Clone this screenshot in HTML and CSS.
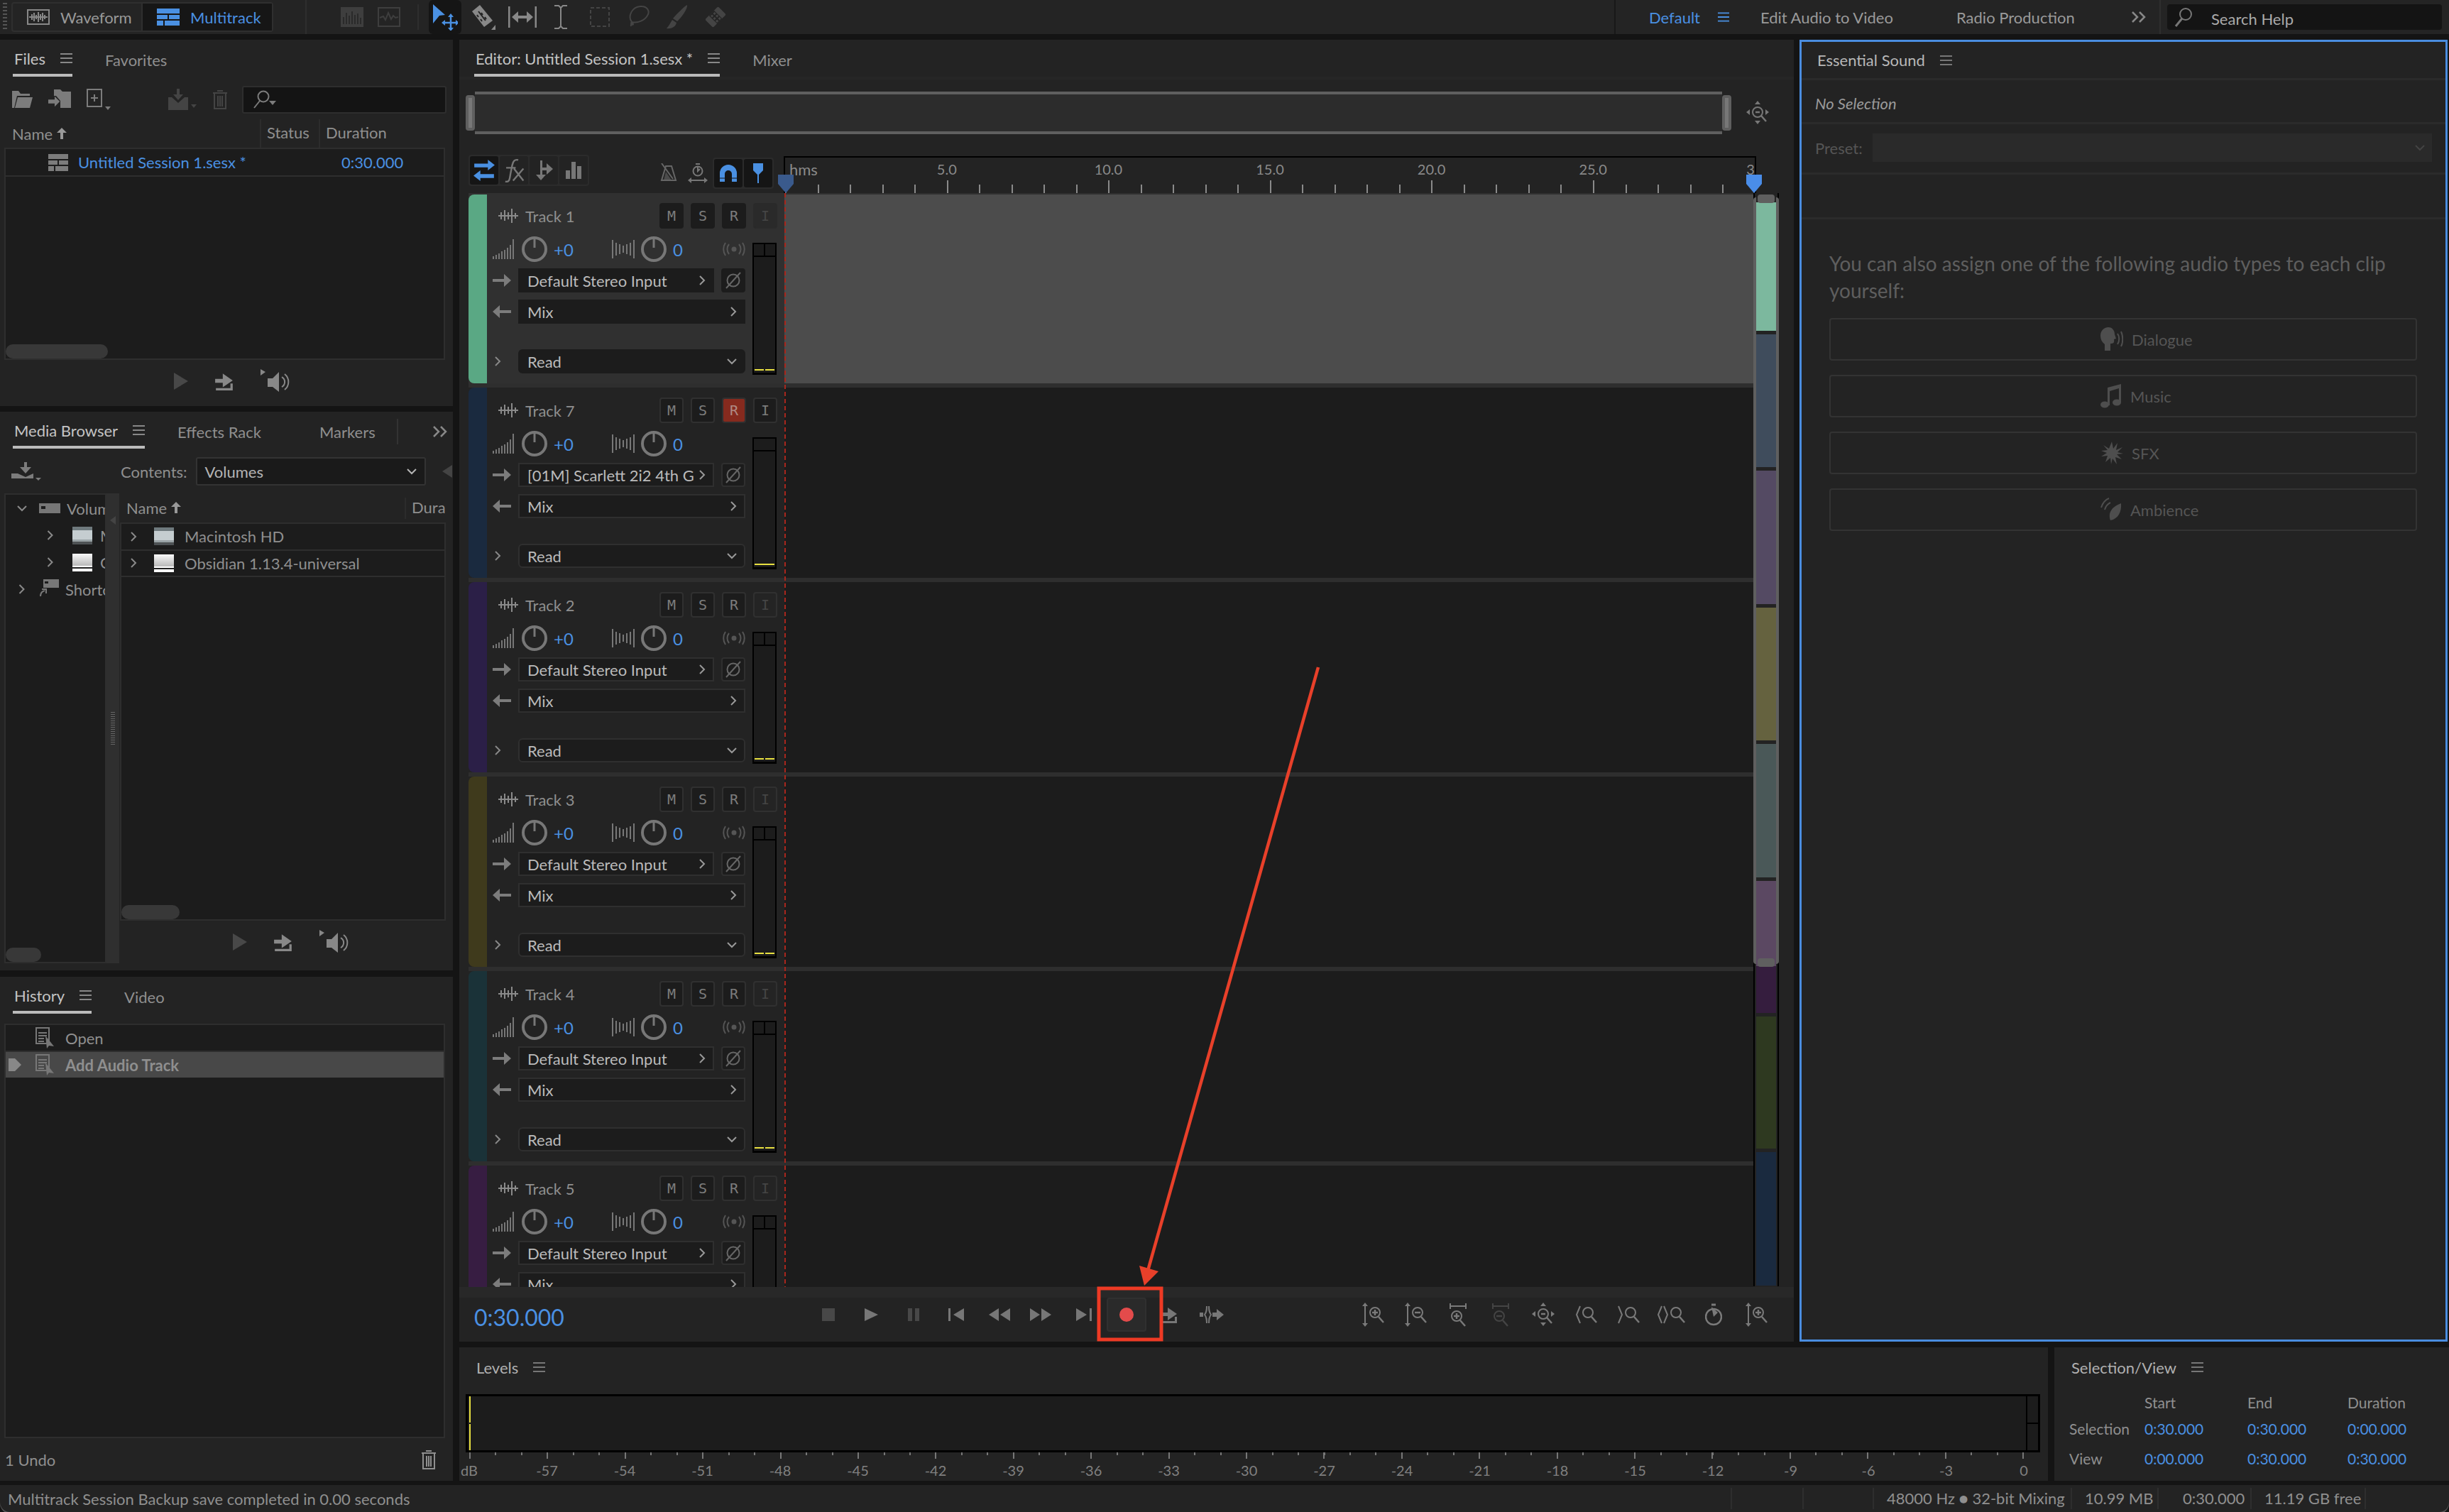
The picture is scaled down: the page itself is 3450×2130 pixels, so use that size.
FILE: index.html
```html
<!DOCTYPE html>
<html lang="en">
<head>
    <meta charset="UTF-8">
    <title>Adobe Audition - Multitrack</title>
    <link rel="stylesheet" href="styles.css">
</head>
<body>

<svg class="defs" width="0" height="0">
    <defs>
        <symbol id="i-menu" viewBox="0 0 17 14"><path d="M0 0h17v2H0zM0 6h17v2H0zM0 12h17v2H0z" fill="currentColor"/></symbol>
        <symbol id="i-up" viewBox="0 0 14 16"><path d="M7 0l7 7H9v9H5V7H0z" fill="currentColor"/></symbol>
        <symbol id="i-wavebox" viewBox="0 0 32 22"><path d="M1 1h30v20H1z" fill="none" stroke="currentColor" stroke-width="2"/><path d="M3 11h26M7 7v8M10 5v12M13 8v6M16 4v14M19 7v8M22 5v12M25 8v6" stroke="currentColor" stroke-width="2" fill="none"/></symbol>
        <symbol id="i-multi" viewBox="0 0 32 24"><path d="M0 0h32v7H0zM0 9h15v6H0zM17 9h15v6H17zM0 17h9v7H0zM11 17h21v7H11z" fill="currentColor"/></symbol>
        <symbol id="i-dimwave" viewBox="0 0 32 28"><path d="M0 0h32v28H0z" fill="currentColor"/><path d="M4 24V14M8 24V8M12 24V12M16 24V6M20 24V11M24 24V9M28 24V15" stroke="#242424" stroke-width="1.5"/></symbol>
        <symbol id="i-dimspec" viewBox="0 0 32 28"><path d="M1 1h30v26H1z" fill="none" stroke="currentColor" stroke-width="2"/><path d="M3 15l5-2 3 5 4-10 4 9 3-5 3 3 4-1" fill="none" stroke="currentColor" stroke-width="2"/></symbol>
        <symbol id="i-move" viewBox="0 0 36 38"><path d="M1 1l17 15-8 1-9 11z" fill="currentColor"/><path d="M26 17v20M16 27h20" stroke="currentColor" stroke-width="2.5"/><path d="M26 14l4 5h-8zM26 39l4-5h-8zM13 27l5-4v8zM38 27l-5-4v8z" fill="currentColor"/></symbol>
        <symbol id="i-razor" viewBox="0 0 36 36"><path d="M12 1L1 10l17 22 12-9z" fill="currentColor"/><path d="M10 10l10 13M14 12l2 3M8 15l2 3M19 18l2 3M13 21l2 3" stroke="#242424" stroke-width="2"/><path d="M34 29v7h-6z" fill="currentColor"/></symbol>
        <symbol id="i-range" viewBox="0 0 40 30"><path d="M1 0v30M39 0v30" stroke="currentColor" stroke-width="3"/><path d="M8 15h24" stroke="currentColor" stroke-width="4"/><path d="M5 15l9-8v16zM35 15l-9-8v16z" fill="currentColor"/></symbol>
        <symbol id="i-ibeam" viewBox="0 0 22 34"><path d="M2 1h6l3 3 3-3h6M2 33h6l3-3 3 3h6M11 4v26" fill="none" stroke="currentColor" stroke-width="2"/></symbol>
        <symbol id="i-marquee" viewBox="0 0 28 28"><path d="M1 1h26v26H1z" fill="none" stroke="currentColor" stroke-width="2" stroke-dasharray="5 3"/></symbol>
        <symbol id="i-lasso" viewBox="0 0 34 34"><path d="M8 24C2 16 8 3 20 2c10-1 14 7 10 13-4 7-14 11-22 9zM8 24c-3 3 2 5 2 3s-4-1-3 3" fill="none" stroke="currentColor" stroke-width="2"/></symbol>
        <symbol id="i-brush" viewBox="0 0 32 36"><path d="M30 1c1 5-8 18-14 23l-6-4C16 13 26 3 30 1zM9 22l6 4c-1 6-8 9-14 8 3-3 5-7 8-12z" fill="currentColor"/></symbol>
        <symbol id="i-heal" viewBox="0 0 38 36"><g transform="rotate(-45 19 18)"><rect x="6" y="10" width="26" height="16" rx="2" fill="currentColor"/><rect x="14" y="10" width="10" height="16" fill="#242424"/><path d="M15 12h3v3h-3zM20 12h3v3h-3zM15 17h3v3h-3zM20 17h3v3h-3zM15 22h3v3h-3zM20 22h3v3h-3z" fill="currentColor"/></g></symbol>
        <symbol id="i-folder" viewBox="0 0 30 24"><path d="M1 0h9l3 4h13v3H8L4 24H1zM9 9h21l-4 15H5z" fill="currentColor"/></symbol>
        <symbol id="i-folderin" viewBox="0 0 32 28"><path d="M8 0h9l3 3h12v23H17V16L11 9H8z" fill="currentColor"/><path d="M0 17h10v-5l8 8-8 8v-5H0z" fill="currentColor" transform="translate(0 -1) scale(.9)"/></symbol>
        <symbol id="i-newbox" viewBox="0 0 34 30"><path d="M1 1h20v24H1z" fill="none" stroke="currentColor" stroke-width="2"/><path d="M11 8v10M6 13h10" stroke="currentColor" stroke-width="2"/><path d="M26 25h8l-4 5z" fill="currentColor"/></symbol>
        <symbol id="i-insert" viewBox="0 0 40 30"><path d="M12 0h4v8h5l-7 8-7-8h5z" fill="currentColor"/><path d="M0 12h5l9 8 9-8h5v18H0z" fill="currentColor"/><path d="M32 22h8l-4 5z" fill="currentColor"/></symbol>
        <symbol id="i-trash" viewBox="0 0 22 28"><path d="M7 2h8M1 5h20M3 5v22h16V5M8 9v15M11 9v15M14 9v15" fill="none" stroke="currentColor" stroke-width="2"/></symbol>
        <symbol id="i-search" viewBox="0 0 34 26"><circle cx="16" cy="9" r="7.5" fill="none" stroke="currentColor" stroke-width="2"/><path d="M11 15L3 25" stroke="currentColor" stroke-width="2"/><path d="M24 15h10l-5 6z" fill="currentColor"/></symbol>
        <symbol id="i-searchbig" viewBox="0 0 26 28"><circle cx="16" cy="10" r="8" fill="none" stroke="currentColor" stroke-width="2"/><path d="M11 16L2 27" stroke="currentColor" stroke-width="3"/></symbol>
        <symbol id="i-play" viewBox="0 0 20 24"><path d="M0 0l20 12L0 24z" fill="currentColor"/></symbol>
        <symbol id="i-export" viewBox="0 0 28 26"><path d="M3 15v9h22v-9" fill="none" stroke="currentColor" stroke-width="4"/><path d="M3 11h11V3l12 9-12 8v-5H3z" fill="currentColor" transform="translate(0 -3)"/></symbol>
        <symbol id="i-tarrow" viewBox="0 0 26 24"><path d="M1 9h10V2l13 9-13 9v-6H1z" fill="currentColor"/><path d="M2 21h19v-6h3v9H2z" fill="currentColor"/></symbol>
        <symbol id="i-speaker" viewBox="0 0 42 34"><path d="M0 0l7 4-7 5z" fill="currentColor"/><path d="M10 13h7l9-9v28l-9-7h-7z" fill="currentColor"/><path d="M30 11a8 8 0 0 1 0 14M34 7a14 14 0 0 1 0 22" fill="none" stroke="currentColor" stroke-width="2"/></symbol>
        <symbol id="i-trk" viewBox="0 0 28 22"><path d="M0 11h28M4 6v10M9 3v15M14 6v10M19 1v20M24 7v8" stroke="currentColor" stroke-width="2" fill="none"/></symbol>
        <symbol id="i-vol" viewBox="0 0 30 28"><path d="M1 28v-4M5 28v-6M9 28v-8M13 28v-11M17 28v-13M21 28v-16M25 28v-20M29 28V0" stroke="currentColor" stroke-width="2"/></symbol>
        <symbol id="i-pan" viewBox="0 0 32 26"><path d="M1 26V0M6 22V4M11 20V6M16 18V8M21 20V6M26 22V4M31 26V0" stroke="currentColor" stroke-width="2"/></symbol>
        <symbol id="i-knob" viewBox="0 0 36 36"><circle cx="18" cy="18" r="16" fill="none" stroke="currentColor" stroke-width="4"/><path d="M18 1v15" stroke="currentColor" stroke-width="3"/></symbol>
        <symbol id="i-mon" viewBox="0 0 32 20"><circle cx="16" cy="10" r="3.5" fill="currentColor"/><path d="M9 3a11 11 0 0 0 0 14M23 3a11 11 0 0 1 0 14M4 1a16 16 0 0 0 0 18M28 1a16 16 0 0 1 0 18" fill="none" stroke="currentColor" stroke-width="2"/></symbol>
        <symbol id="i-right" viewBox="0 0 26 18"><path d="M0 7h16V0l10 9-10 9v-7H0z" fill="currentColor"/></symbol>
        <symbol id="i-left" viewBox="0 0 26 18"><path d="M26 7H10V0L0 9l10 9v-7h16z" fill="currentColor"/></symbol>
        <symbol id="i-phase" viewBox="0 0 22 24"><circle cx="11" cy="12" r="8.5" fill="none" stroke="currentColor" stroke-width="2"/><path d="M21 1L1 23" stroke="currentColor" stroke-width="2"/></symbol>
        <symbol id="i-chevr" viewBox="0 0 9 14"><path d="M1 1l6 6-6 6" fill="none" stroke="currentColor" stroke-width="2"/></symbol>
        <symbol id="i-chevd" viewBox="0 0 14 9"><path d="M1 1l6 6 6-6" fill="none" stroke="currentColor" stroke-width="2"/></symbol>
        <symbol id="i-dbl" viewBox="0 0 20 16"><path d="M1 1l7 7-7 7M11 1l7 7-7 7" fill="none" stroke="currentColor" stroke-width="2.5"/></symbol>
        <symbol id="i-swap" viewBox="0 0 30 28"><path d="M2 8h18V3l9 7-9 7v-4H2z" fill="currentColor" transform="translate(0 -3)"/><path d="M28 20H10v-5l-9 7 9 7v-4h18z" fill="currentColor" transform="translate(0 -1)"/></symbol>
        <symbol id="i-fx" viewBox="0 0 28 28"><path d="M4 27c5 1 5-3 6-9l2-10c1-5 3-7 7-6M5 11h11M14 12l11 14M25 12L13 26" fill="none" stroke="currentColor" stroke-width="2"/></symbol>
        <symbol id="i-route" viewBox="0 0 26 28"><path d="M8 0h3v10h6V4l9 8-9 8v-6h-6v6h5l-7 8-7-8h6z" fill="currentColor"/></symbol>
        <symbol id="i-bars" viewBox="0 0 22 24"><path d="M0 12h6v12H0zM8 0h6v24H8zM16 6h6v18h-6z" fill="currentColor"/></symbol>
        <symbol id="i-metro" viewBox="0 0 24 26"><path d="M8 4h8l6 20H2zM2 0l16 22" fill="none" stroke="currentColor" stroke-width="2"/><path d="M5 24l3-12 8 12z" fill="currentColor" opacity=".6"/></symbol>
        <symbol id="i-timer" viewBox="0 0 28 28"><circle cx="14" cy="11" r="6.5" fill="none" stroke="currentColor" stroke-width="2"/><path d="M11 1h6M14 4v7l3-3M4 24h20" fill="none" stroke="currentColor" stroke-width="2"/><path d="M0 24l5-4v8zM28 24l-5-4v8z" fill="currentColor"/></symbol>
        <symbol id="i-magnet" viewBox="0 0 24 25"><path d="M0 24V12a12 12 0 0 1 24 0v12h-7V13a5 5 0 0 0-10 0v11z" fill="currentColor"/><path d="M0 19h7M17 19h7" stroke="#141414" stroke-width="1"/></symbol>
        <symbol id="i-pin" viewBox="0 0 14 28"><path d="M0 0h14v10l-6 6v12H6V16l-6-6z" fill="currentColor"/></symbol>
        <symbol id="i-zoomall" viewBox="0 0 34 34"><circle cx="17" cy="16" r="7" fill="none" stroke="currentColor" stroke-width="2"/><path d="M14 16h6M22 21l7 8" stroke="currentColor" stroke-width="2.5"/><path d="M17 0l4 5h-8zM1 16l5-4v8zM33 16l-5-4v8zM17 33l4-5h-8z" fill="currentColor"/></symbol>
        <symbol id="i-start" viewBox="0 0 22 18"><path d="M0 0h3v18H0zM22 0v18L7 9z" fill="currentColor"/></symbol>
        <symbol id="i-end" viewBox="0 0 22 18"><path d="M19 0h3v18h-3zM0 0v18l15-9z" fill="currentColor"/></symbol>
        <symbol id="i-rew" viewBox="0 0 32 18"><path d="M16 0v18L2 9zM32 0v18L18 9z" fill="currentColor"/></symbol>
        <symbol id="i-ffw" viewBox="0 0 32 18"><path d="M0 0v18l14-9zM16 0v18l14-9z" fill="currentColor"/></symbol>
        <symbol id="i-skip" viewBox="0 0 34 24"><path d="M10 0c0 5 0 8-3 12 3 4 3 7 3 12M13 0c0 5 0 8 3 12-3 4-3 7-3 12" fill="none" stroke="currentColor" stroke-width="2"/><path d="M0 9h5v6H0zM18 9h6V4l10 8-10 8v-5h-6z" fill="currentColor"/></symbol>
        <symbol id="i-magp" viewBox="0 0 22 24"><circle cx="9" cy="9" r="7" fill="none" stroke="currentColor" stroke-width="2"/><path d="M9 5v8M5 9h8M14 15l7 8" stroke="currentColor" stroke-width="2.5" fill="none"/></symbol>
        <symbol id="i-magm" viewBox="0 0 22 24"><circle cx="9" cy="9" r="7" fill="none" stroke="currentColor" stroke-width="2"/><path d="M5 9h8M14 15l7 8" stroke="currentColor" stroke-width="2.5" fill="none"/></symbol>
        <symbol id="i-mag" viewBox="0 0 22 24"><circle cx="9" cy="9" r="7" fill="none" stroke="currentColor" stroke-width="2"/><path d="M14 15l7 8" stroke="currentColor" stroke-width="2.5" fill="none"/></symbol>
        <symbol id="i-vspan" viewBox="0 0 8 34"><path d="M4 4v26" stroke="currentColor" stroke-width="2"/><path d="M4 0l4 5H0zM4 34l4-5H0z" fill="currentColor"/></symbol>
        <symbol id="i-hspan" viewBox="0 0 24 8"><path d="M2 4h20M1 0v8M23 0v8" stroke="currentColor" stroke-width="2"/></symbol>
        <symbol id="i-brace" viewBox="0 0 8 26"><path d="M7 1L2 13l5 12" fill="none" stroke="currentColor" stroke-width="2"/></symbol>
        <symbol id="i-clock" viewBox="0 0 24 32"><circle cx="12" cy="19" r="11" fill="none" stroke="currentColor" stroke-width="2.5"/><path d="M12 19L9 5l9 8z" fill="currentColor"/><path d="M9 2h6" stroke="currentColor" stroke-width="3"/></symbol>
        <symbol id="i-session" viewBox="0 0 28 24"><path d="M0 0h28v7H0zM0 9h13v6H0zM15 9h13v6H15zM0 17h8v7H0zM10 17h18v7H10z" fill="currentColor"/></symbol>
        <symbol id="i-import" viewBox="0 0 42 26"><path d="M18 0h4v7h6l-8 9-8-9h6z" fill="currentColor"/><path d="M0 16h9l11 5 11-5v7H0z" fill="currentColor"/><path d="M34 22h8l-4 4z" fill="currentColor"/></symbol>
        <symbol id="i-volume" viewBox="0 0 30 14"><path d="M0 0h30v14H0z" fill="currentColor"/><path d="M3 4h6v4H3z" fill="#1c1c1c"/></symbol>
        <symbol id="i-short" viewBox="0 0 28 28"><path d="M6 0h22v12H6z" fill="currentColor"/><path d="M8 3h5v3H8z" fill="#1c1c1c"/><path d="M2 24c0-4 2-7 6-8M4 14h6v6" fill="none" stroke="currentColor" stroke-width="2"/></symbol>
        <symbol id="i-hist" viewBox="0 0 26 30"><path d="M1 1h18v22H1z" fill="none" stroke="currentColor" stroke-width="2"/><path d="M4 8h12M4 12h12M4 16h8M4 20h8" stroke="currentColor" stroke-width="2"/><path d="M14 12l12 15-7-1-3 4z" fill="currentColor"/></symbol>
        <symbol id="i-hist-tri" viewBox="0 0 18 18"><path d="M0 0h9l9 9-9 9H0z" fill="currentColor"/></symbol>
        <symbol id="i-dialogue" viewBox="0 0 32 34"><path d="M0 12C0 4 6 0 11 0c6 0 9 5 9 10l2 6-3 1c1 5-1 6-5 6v10H6v-9C2 21 0 17 0 12z" fill="currentColor"/><path d="M24 9c3 4 3 11 0 15M29 6c3 6 3 16 0 21" fill="none" stroke="currentColor" stroke-width="2"/></symbol>
        <symbol id="i-music" viewBox="0 0 30 34"><path d="M10 5L29 0v26h-3V6L13 10v20h-3z" fill="currentColor"/><ellipse cx="6" cy="29" rx="6" ry="4.5" fill="currentColor"/><ellipse cx="23" cy="26" rx="6" ry="4.5" fill="currentColor"/></symbol>
        <symbol id="i-sfx" viewBox="0 0 32 32"><path d="M16 0l2 10 6-8-2 10 9-4-7 7 8 2-9 1 7 7-9-3 2 10-6-8-2 8-1-9-7 6 3-9-9 1 8-5-8-3 9-1-6-7 8 5z" fill="currentColor"/></symbol>
        <symbol id="i-amb" viewBox="0 0 30 34"><path d="M29 8c1 12-4 22-15 24-3-8-1-18 15-24z" fill="currentColor"/><path d="M1 14C3 8 7 3 12 1M6 17c1-4 4-8 8-10" fill="none" stroke="currentColor" stroke-width="2"/></symbol>
    </defs>
</svg>

<header class="toolbar">
    <div class="grip"></div>
    <div class="modes">
        <div class="mode"><svg width="32" height="22"><use href="#i-wavebox"/></svg><span>Waveform</span></div>
        <div class="mode on"><svg width="32" height="24"><use href="#i-multi"/></svg><span>Multitrack</span></div>
    </div>
    <div class="tb-sep"></div>
    <div class="tb-dim">
        <svg width="32" height="28"><use href="#i-dimwave"/></svg>
        <svg width="32" height="28"><use href="#i-dimspec"/></svg>
    </div>
    <div class="tb-sep short"></div>
    <div class="tools">
        <div class="tool on"><svg width="36" height="38"><use href="#i-move"/></svg></div>
        <div class="tool"><svg width="36" height="36"><use href="#i-razor"/></svg></div>
        <div class="tool"><svg width="40" height="30"><use href="#i-range"/></svg></div>
        <div class="tool"><svg width="22" height="34"><use href="#i-ibeam"/></svg></div>
        <div class="tool dim"><svg width="28" height="28"><use href="#i-marquee"/></svg></div>
        <div class="tool dim"><svg width="34" height="34"><use href="#i-lasso"/></svg></div>
        <div class="tool dim"><svg width="32" height="36"><use href="#i-brush"/></svg></div>
        <div class="tool dim"><svg width="38" height="36"><use href="#i-heal"/></svg></div>
    </div>
    <div class="ws">
        <div class="ws-item ws-default">Default</div>
        <div class="ws-item ws-menu"><svg width="16" height="14"><use href="#i-menu"/></svg></div>
        <div class="ws-item ws-edit">Edit Audio to Video</div>
        <div class="ws-item ws-radio">Radio Production</div>
        <div class="ws-item ws-more"><svg width="20" height="16"><use href="#i-dbl"/></svg></div>
    </div>
    <div class="help">
        <svg width="26" height="28"><use href="#i-searchbig"/></svg>
        <span>Search Help</span>
    </div>
</header>

<main class="workspace">
    <div class="left-col">

        <section class="panel files">
            <div class="tabs">
                <div class="tab active"><span>Files</span><svg width="17" height="14"><use href="#i-menu"/></svg></div>
                <div class="tab"><span>Favorites</span></div>
            </div>
            <div class="file-tools">
                <svg width="30" height="24"><use href="#i-folder"/></svg>
                <svg width="32" height="28"><use href="#i-folderin"/></svg>
                <svg width="34" height="30"><use href="#i-newbox"/></svg>
                <svg class="dim first-dim" width="40" height="30"><use href="#i-insert"/></svg>
                <svg class="dim" width="22" height="28"><use href="#i-trash"/></svg>
                <div class="search"><svg width="34" height="26"><use href="#i-search"/></svg></div>
            </div>
            <div class="list-head">
                <div class="lh-name">Name <svg class="sort" width="14" height="16"><use href="#i-up"/></svg></div>
                <div class="lh-status">Status</div>
                <div class="lh-dur">Duration</div>
            </div>
            <div class="list file-list">
                <div class="row file-row">
                    <svg width="28" height="24"><use href="#i-session"/></svg>
                    <span class="blue f-name">Untitled Session 1.sesx *</span>
                    <span class="blue f-dur">0:30.000</span>
                </div>
                <div class="thumb file-thumb"></div>
            </div>
            <div class="preview">
                <svg class="dim" width="20" height="24"><use href="#i-play"/></svg>
                <svg width="28" height="26"><use href="#i-tarrow"/></svg>
                <svg width="42" height="34"><use href="#i-speaker"/></svg>
            </div>
        </section>

        <section class="panel media">
            <div class="tabs">
                <div class="tab active"><span>Media Browser</span><svg width="17" height="14"><use href="#i-menu"/></svg></div>
                <div class="tab"><span>Effects Rack</span></div>
                <div class="tab wide"><span>Markers</span></div>
                <div class="tab-end"><svg width="20" height="16"><use href="#i-dbl"/></svg></div>
            </div>
            <div class="contents-row">
                <svg width="42" height="26"><use href="#i-import"/></svg>
                <span class="contents-label">Contents:</span>
                <div class="contents-select"><span>Volumes</span><svg width="14" height="9"><use href="#i-chevd"/></svg></div>
                <div class="tri-left"></div>
            </div>
            <div class="browser">
                <div class="list tree">
                    <div class="tree-row"><svg class="chev" width="14" height="9"><use href="#i-chevd"/></svg><svg class="t-ic" width="30" height="14"><use href="#i-volume"/></svg><span>Volumes</span></div>
                    <div class="tree-row sub"><svg class="chev" width="9" height="14"><use href="#i-chevr"/></svg><div class="disk hd"></div><span>Macintosh HD</span></div>
                    <div class="tree-row sub"><svg class="chev" width="9" height="14"><use href="#i-chevr"/></svg><div class="disk ext"></div><span>Obsidian</span></div>
                    <div class="tree-row"><svg class="chev" width="9" height="14"><use href="#i-chevr"/></svg><svg class="t-ic" width="28" height="28"><use href="#i-short"/></svg><span>Shortcuts</span></div>
                    <div class="thumb tree-thumb"></div>
                </div>
                <div class="divider"><div class="tri-left small"></div><div class="dots"></div></div>
                <div class="browser-right">
                    <div class="browser-head">
                        <div class="bh-name">Name <svg class="sort" width="14" height="16"><use href="#i-up"/></svg></div>
                        <div class="bh-dur">Dura</div>
                    </div>
                    <div class="list browse-list">
                        <div class="row browse-row"><svg width="9" height="14"><use href="#i-chevr"/></svg><div class="disk hd"></div><span>Macintosh HD</span></div>
                        <div class="row browse-row"><svg width="9" height="14"><use href="#i-chevr"/></svg><div class="disk ext"></div><span>Obsidian 1.13.4-universal</span></div>
                        <div class="thumb browse-thumb"></div>
                    </div>
                    <div class="preview media-preview">
                        <svg class="dim" width="20" height="24"><use href="#i-play"/></svg>
                        <svg width="28" height="26"><use href="#i-tarrow"/></svg>
                        <svg width="42" height="34"><use href="#i-speaker"/></svg>
                    </div>
                </div>
            </div>
        </section>

        <section class="panel history">
            <div class="tabs">
                <div class="tab active"><span>History</span><svg width="17" height="14"><use href="#i-menu"/></svg></div>
                <div class="tab"><span>Video</span></div>
            </div>
            <div class="list hist-list">
                <div class="hist-row"><svg class="h-ic" width="26" height="30"><use href="#i-hist"/></svg><span>Open</span></div>
                <div class="hist-row cur"><svg class="h-tri" width="18" height="18"><use href="#i-hist-tri"/></svg><svg class="h-ic" width="26" height="30"><use href="#i-hist"/></svg><span>Add Audio Track</span></div>
            </div>
            <div class="hist-foot">
                <span>1 Undo</span>
                <svg width="22" height="28"><use href="#i-trash"/></svg>
            </div>
        </section>
    </div>

    <div class="right-col">
        <div class="upper">
            <section class="panel editor">
                <div class="tabs editor-tabs">
                    <div class="tab active"><span>Editor: Untitled Session 1.sesx *</span><svg width="17" height="14"><use href="#i-menu"/></svg></div>
                    <div class="tab"><span>Mixer</span></div>
                </div>
                <div class="zoom-row">
                    <div class="nav-bar"><div class="nav-h"></div><div class="nav-mid"></div><div class="nav-h"></div></div>
                    <svg width="34" height="34"><use href="#i-zoomall"/></svg>
                </div>
                <div class="ctl-row">
                    <div class="seg-group">
                        <div class="seg on"><svg width="32" height="30"><use href="#i-swap"/></svg></div>
                        <div class="seg"><svg width="34" height="34"><use href="#i-fx"/></svg></div>
                        <div class="seg"><svg width="26" height="30"><use href="#i-route"/></svg></div>
                        <div class="seg"><svg width="22" height="24"><use href="#i-bars"/></svg></div>
                    </div>
                    <svg class="metro" width="24" height="26"><use href="#i-metro"/></svg>
                    <svg class="timer" width="28" height="28"><use href="#i-timer"/></svg>
                    <div class="snap">
                        <div class="seg on"><svg width="24" height="25"><use href="#i-magnet"/></svg></div>
                        <div class="seg on"><svg width="14" height="28"><use href="#i-pin"/></svg></div>
                    </div>
                    <div class="ruler">
                        <div class="ruler-labels">
                            <span class="hms">hms</span><span>5.0</span><span>10.0</span><span>15.0</span><span>20.0</span><span>25.0</span><span>30</span>
                        </div>
                        <div class="ruler-ticks"></div>
                    </div>
                    <div class="marker m-start"></div>
                    <div class="marker m-end"></div>
                </div>

                <div class="lanes">
                    <div class="tracks">

                        <div class="track sel">
                            <div class="head">
                                <div class="band b1"></div>
                                <div class="head-body">
                                    <div class="name-row"><svg width="28" height="22"><use href="#i-trk"/></svg><span class="t-name">Track 1</span><div class="msri"><b>M</b><b>S</b><b>R</b><b class="off">I</b></div></div>
                                    <div class="ctl-wrap">
                                        <div class="ctls">
                                            <div class="knobs"><svg class="vol" width="30" height="28"><use href="#i-vol"/></svg><svg class="knob" width="36" height="36"><use href="#i-knob"/></svg><span class="val v-vol">+0</span><svg class="pan" width="32" height="26"><use href="#i-pan"/></svg><svg class="knob" width="36" height="36"><use href="#i-knob"/></svg><span class="val v-pan">0</span><svg class="mon" width="32" height="20"><use href="#i-mon"/></svg></div>
                                            <div class="io in"><svg class="io-ic" width="26" height="18"><use href="#i-right"/></svg><div class="sel-box"><span>Default Stereo Input</span><svg width="9" height="14"><use href="#i-chevr"/></svg></div><div class="phase"><svg width="22" height="24"><use href="#i-phase"/></svg></div></div>
                                            <div class="io out"><svg class="io-ic" width="26" height="18"><use href="#i-left"/></svg><div class="sel-box"><span>Mix</span><svg width="9" height="14"><use href="#i-chevr"/></svg></div></div>
                                            <div class="io auto"><svg class="io-ic chev-ic" width="9" height="14"><use href="#i-chevr"/></svg><div class="sel-box round"><span>Read</span><svg width="14" height="9"><use href="#i-chevd"/></svg></div></div>
                                        </div>
                                        <div class="meter"><div class="m-top"><i></i><i></i></div><div class="m-body"><i></i><i></i></div></div>
                                    </div>
                                </div>
                            </div>
                            <div class="clip"></div>
                        </div>

                        <div class="track arm">
                            <div class="head">
                                <div class="band b7"></div>
                                <div class="head-body">
                                    <div class="name-row"><svg width="28" height="22"><use href="#i-trk"/></svg><span class="t-name">Track 7</span><div class="msri"><b>M</b><b>S</b><b class="rec">R</b><b>I</b></div></div>
                                    <div class="ctl-wrap">
                                        <div class="ctls">
                                            <div class="knobs"><svg class="vol" width="30" height="28"><use href="#i-vol"/></svg><svg class="knob" width="36" height="36"><use href="#i-knob"/></svg><span class="val v-vol">+0</span><svg class="pan" width="32" height="26"><use href="#i-pan"/></svg><svg class="knob" width="36" height="36"><use href="#i-knob"/></svg><span class="val v-pan">0</span></div>
                                            <div class="io in"><svg class="io-ic" width="26" height="18"><use href="#i-right"/></svg><div class="sel-box"><span>[01M] Scarlett 2i2 4th G</span><svg width="9" height="14"><use href="#i-chevr"/></svg></div><div class="phase"><svg width="22" height="24"><use href="#i-phase"/></svg></div></div>
                                            <div class="io out"><svg class="io-ic" width="26" height="18"><use href="#i-left"/></svg><div class="sel-box"><span>Mix</span><svg width="9" height="14"><use href="#i-chevr"/></svg></div></div>
                                            <div class="io auto"><svg class="io-ic chev-ic" width="9" height="14"><use href="#i-chevr"/></svg><div class="sel-box round"><span>Read</span><svg width="14" height="9"><use href="#i-chevd"/></svg></div></div>
                                        </div>
                                        <div class="meter"><div class="m-top"><i></i></div><div class="m-body"><i></i></div></div>
                                    </div>
                                </div>
                            </div>
                            <div class="clip"></div>
                        </div>

                        <div class="track">
                            <div class="head">
                                <div class="band b2"></div>
                                <div class="head-body">
                                    <div class="name-row"><svg width="28" height="22"><use href="#i-trk"/></svg><span class="t-name">Track 2</span><div class="msri"><b>M</b><b>S</b><b>R</b><b class="off">I</b></div></div>
                                    <div class="ctl-wrap">
                                        <div class="ctls">
                                            <div class="knobs"><svg class="vol" width="30" height="28"><use href="#i-vol"/></svg><svg class="knob" width="36" height="36"><use href="#i-knob"/></svg><span class="val v-vol">+0</span><svg class="pan" width="32" height="26"><use href="#i-pan"/></svg><svg class="knob" width="36" height="36"><use href="#i-knob"/></svg><span class="val v-pan">0</span><svg class="mon" width="32" height="20"><use href="#i-mon"/></svg></div>
                                            <div class="io in"><svg class="io-ic" width="26" height="18"><use href="#i-right"/></svg><div class="sel-box"><span>Default Stereo Input</span><svg width="9" height="14"><use href="#i-chevr"/></svg></div><div class="phase"><svg width="22" height="24"><use href="#i-phase"/></svg></div></div>
                                            <div class="io out"><svg class="io-ic" width="26" height="18"><use href="#i-left"/></svg><div class="sel-box"><span>Mix</span><svg width="9" height="14"><use href="#i-chevr"/></svg></div></div>
                                            <div class="io auto"><svg class="io-ic chev-ic" width="9" height="14"><use href="#i-chevr"/></svg><div class="sel-box round"><span>Read</span><svg width="14" height="9"><use href="#i-chevd"/></svg></div></div>
                                        </div>
                                        <div class="meter"><div class="m-top"><i></i><i></i></div><div class="m-body"><i></i><i></i></div></div>
                                    </div>
                                </div>
                            </div>
                            <div class="clip"></div>
                        </div>

                        <div class="track">
                            <div class="head">
                                <div class="band b3"></div>
                                <div class="head-body">
                                    <div class="name-row"><svg width="28" height="22"><use href="#i-trk"/></svg><span class="t-name">Track 3</span><div class="msri"><b>M</b><b>S</b><b>R</b><b class="off">I</b></div></div>
                                    <div class="ctl-wrap">
                                        <div class="ctls">
                                            <div class="knobs"><svg class="vol" width="30" height="28"><use href="#i-vol"/></svg><svg class="knob" width="36" height="36"><use href="#i-knob"/></svg><span class="val v-vol">+0</span><svg class="pan" width="32" height="26"><use href="#i-pan"/></svg><svg class="knob" width="36" height="36"><use href="#i-knob"/></svg><span class="val v-pan">0</span><svg class="mon" width="32" height="20"><use href="#i-mon"/></svg></div>
                                            <div class="io in"><svg class="io-ic" width="26" height="18"><use href="#i-right"/></svg><div class="sel-box"><span>Default Stereo Input</span><svg width="9" height="14"><use href="#i-chevr"/></svg></div><div class="phase"><svg width="22" height="24"><use href="#i-phase"/></svg></div></div>
                                            <div class="io out"><svg class="io-ic" width="26" height="18"><use href="#i-left"/></svg><div class="sel-box"><span>Mix</span><svg width="9" height="14"><use href="#i-chevr"/></svg></div></div>
                                            <div class="io auto"><svg class="io-ic chev-ic" width="9" height="14"><use href="#i-chevr"/></svg><div class="sel-box round"><span>Read</span><svg width="14" height="9"><use href="#i-chevd"/></svg></div></div>
                                        </div>
                                        <div class="meter"><div class="m-top"><i></i><i></i></div><div class="m-body"><i></i><i></i></div></div>
                                    </div>
                                </div>
                            </div>
                            <div class="clip"></div>
                        </div>

                        <div class="track">
                            <div class="head">
                                <div class="band b4"></div>
                                <div class="head-body">
                                    <div class="name-row"><svg width="28" height="22"><use href="#i-trk"/></svg><span class="t-name">Track 4</span><div class="msri"><b>M</b><b>S</b><b>R</b><b class="off">I</b></div></div>
                                    <div class="ctl-wrap">
                                        <div class="ctls">
                                            <div class="knobs"><svg class="vol" width="30" height="28"><use href="#i-vol"/></svg><svg class="knob" width="36" height="36"><use href="#i-knob"/></svg><span class="val v-vol">+0</span><svg class="pan" width="32" height="26"><use href="#i-pan"/></svg><svg class="knob" width="36" height="36"><use href="#i-knob"/></svg><span class="val v-pan">0</span><svg class="mon" width="32" height="20"><use href="#i-mon"/></svg></div>
                                            <div class="io in"><svg class="io-ic" width="26" height="18"><use href="#i-right"/></svg><div class="sel-box"><span>Default Stereo Input</span><svg width="9" height="14"><use href="#i-chevr"/></svg></div><div class="phase"><svg width="22" height="24"><use href="#i-phase"/></svg></div></div>
                                            <div class="io out"><svg class="io-ic" width="26" height="18"><use href="#i-left"/></svg><div class="sel-box"><span>Mix</span><svg width="9" height="14"><use href="#i-chevr"/></svg></div></div>
                                            <div class="io auto"><svg class="io-ic chev-ic" width="9" height="14"><use href="#i-chevr"/></svg><div class="sel-box round"><span>Read</span><svg width="14" height="9"><use href="#i-chevd"/></svg></div></div>
                                        </div>
                                        <div class="meter"><div class="m-top"><i></i><i></i></div><div class="m-body"><i></i><i></i></div></div>
                                    </div>
                                </div>
                            </div>
                            <div class="clip"></div>
                        </div>

                        <div class="track">
                            <div class="head">
                                <div class="band b5"></div>
                                <div class="head-body">
                                    <div class="name-row"><svg width="28" height="22"><use href="#i-trk"/></svg><span class="t-name">Track 5</span><div class="msri"><b>M</b><b>S</b><b>R</b><b class="off">I</b></div></div>
                                    <div class="ctl-wrap">
                                        <div class="ctls">
                                            <div class="knobs"><svg class="vol" width="30" height="28"><use href="#i-vol"/></svg><svg class="knob" width="36" height="36"><use href="#i-knob"/></svg><span class="val v-vol">+0</span><svg class="pan" width="32" height="26"><use href="#i-pan"/></svg><svg class="knob" width="36" height="36"><use href="#i-knob"/></svg><span class="val v-pan">0</span><svg class="mon" width="32" height="20"><use href="#i-mon"/></svg></div>
                                            <div class="io in"><svg class="io-ic" width="26" height="18"><use href="#i-right"/></svg><div class="sel-box"><span>Default Stereo Input</span><svg width="9" height="14"><use href="#i-chevr"/></svg></div><div class="phase"><svg width="22" height="24"><use href="#i-phase"/></svg></div></div>
                                            <div class="io out"><svg class="io-ic" width="26" height="18"><use href="#i-left"/></svg><div class="sel-box"><span>Mix</span><svg width="9" height="14"><use href="#i-chevr"/></svg></div></div>
                                        </div>
                                        <div class="meter"><div class="m-top"><i></i><i></i></div><div class="m-body"><i></i><i></i></div></div>
                                    </div>
                                </div>
                            </div>
                            <div class="clip"></div>
                        </div>

                        <div class="cti-zero"></div>
                    </div>

                    <div class="end-line"></div>
                    <div class="map">
                        <div class="map-band o1"></div>
                        <div class="map-band o2"></div>
                        <div class="map-band o3"></div>
                        <div class="map-band o4"></div>
                        <div class="map-band o5"></div>
                        <div class="map-band o6"></div>
                        <div class="map-band o7"></div>
                        <div class="map-band o8"></div>
                        <div class="map-band o9"></div>
                        <div class="map-frame"><div class="map-h top"></div><div class="map-h bot"></div></div>
                    </div>
                </div>

                <div class="transport">
                    <div class="time">0:30.000</div>
                    <div class="t-btns">
                        <div class="t-btn"><div class="stop"></div></div>
                        <div class="t-btn"><svg width="19" height="18" preserveAspectRatio="none" viewBox="0 0 20 24"><use href="#i-play"/></svg></div>
                        <div class="t-btn"><div class="pause"></div></div>
                        <div class="t-btn"><svg width="22" height="18"><use href="#i-start"/></svg></div>
                        <div class="t-btn"><svg width="32" height="18"><use href="#i-rew"/></svg></div>
                        <div class="t-btn"><svg width="32" height="18"><use href="#i-ffw"/></svg></div>
                        <div class="t-btn"><svg width="22" height="18"><use href="#i-end"/></svg></div>
                        <div class="t-btn"><div class="rec-btn"><div class="rec-dot"></div></div></div>
                        <div class="t-btn"><svg width="26" height="24"><use href="#i-tarrow"/></svg></div>
                        <div class="t-btn"><svg width="34" height="24"><use href="#i-skip"/></svg></div>
                    </div>
                    <div class="z-btns">
                        <div class="z-btn"><svg width="8" height="34"><use href="#i-vspan"/></svg><svg width="22" height="24"><use href="#i-magp"/></svg></div>
                        <div class="z-btn"><svg width="8" height="34"><use href="#i-vspan"/></svg><svg width="22" height="24"><use href="#i-magm"/></svg></div>
                        <div class="z-btn col"><svg width="24" height="8"><use href="#i-hspan"/></svg><svg width="22" height="24"><use href="#i-magp"/></svg></div>
                        <div class="z-btn col dim"><svg width="24" height="8"><use href="#i-hspan"/></svg><svg width="22" height="24"><use href="#i-magm"/></svg></div>
                        <div class="z-btn"><svg width="34" height="34"><use href="#i-zoomall"/></svg></div>
                        <div class="z-btn"><svg width="8" height="26"><use href="#i-brace"/></svg><svg width="22" height="24"><use href="#i-mag"/></svg></div>
                        <div class="z-btn"><svg class="flip" width="8" height="26"><use href="#i-brace"/></svg><svg width="22" height="24"><use href="#i-mag"/></svg></div>
                        <div class="z-btn tight"><svg width="8" height="26"><use href="#i-brace"/></svg><svg class="flip" width="8" height="26"><use href="#i-brace"/></svg><svg width="22" height="24"><use href="#i-mag"/></svg></div>
                        <div class="z-btn"><svg width="24" height="32"><use href="#i-clock"/></svg></div>
                        <div class="z-btn"><svg width="8" height="34"><use href="#i-vspan"/></svg><svg width="22" height="24"><use href="#i-magp"/></svg></div>
                    </div>
                </div>
            </section>

            <section class="panel essential">
                <div class="es-title"><span>Essential Sound</span><svg width="17" height="14"><use href="#i-menu"/></svg></div>
                <div class="es-none">No Selection</div>
                <div class="es-preset"><span>Preset:</span><div class="es-select"><svg width="14" height="9"><use href="#i-chevd"/></svg></div></div>
                <div class="es-gap"></div>
                <p class="es-text">You can also assign one of the following audio types to each clip yourself:</p>
                <div class="es-btn"><svg width="32" height="34"><use href="#i-dialogue"/></svg><span>Dialogue</span></div>
                <div class="es-btn"><svg width="30" height="34"><use href="#i-music"/></svg><span>Music</span></div>
                <div class="es-btn"><svg width="32" height="32"><use href="#i-sfx"/></svg><span>SFX</span></div>
                <div class="es-btn"><svg width="30" height="34"><use href="#i-amb"/></svg><span>Ambience</span></div>
            </section>
        </div>

        <div class="lower">
            <section class="panel levels">
                <div class="tabs plain">
                    <div class="tab head-tab"><span>Levels</span><svg width="17" height="14"><use href="#i-menu"/></svg></div>
                </div>
                <div class="lv-box">
                    <div class="lv-chan"><div class="lv-clip"></div></div>
                    <div class="lv-chan"><div class="lv-clip"></div></div>
                </div>
                <div class="lv-ticks"></div>
                <div class="lv-labels">
                    <span>dB</span><span>-57</span><span>-54</span><span>-51</span><span>-48</span><span>-45</span><span>-42</span><span>-39</span><span>-36</span><span>-33</span><span>-30</span><span>-27</span><span>-24</span><span>-21</span><span>-18</span><span>-15</span><span>-12</span><span>-9</span><span>-6</span><span>-3</span><span>0</span>
                </div>
            </section>
            <section class="panel selection">
                <div class="tabs plain">
                    <div class="tab head-tab"><span>Selection/View</span><svg width="17" height="14"><use href="#i-menu"/></svg></div>
                </div>
                <div class="sel-grid">
                    <span></span><span>Start</span><span>End</span><span>Duration</span>
                    <span>Selection</span><span class="blue">0:30.000</span><span class="blue">0:30.000</span><span class="blue">0:00.000</span>
                    <span>View</span><span class="blue">0:00.000</span><span class="blue">0:30.000</span><span class="blue">0:30.000</span>
                </div>
            </section>
        </div>
    </div>
</main>

<footer class="status">
    <div class="st-msg">Multitrack Session Backup save completed in 0.00 seconds</div>
    <div class="st-cell c1"></div>
    <div class="st-cell c2"></div>
    <div class="st-cell c3">48000 Hz &#9679; 32-bit Mixing</div>
    <div class="st-cell c4">10.99 MB</div>
    <div class="st-cell c5">0:30.000</div>
    <div class="st-cell c6">11.19 GB free</div>
</footer>

<svg class="annot" width="3450" height="2130">
    <path d="M1857 940L1617 1790" stroke="#e8402a" stroke-width="4.5" fill="none"/>
    <path d="M1612 1811L1605 1783L1632 1791z" fill="#e8402a"/>
    <rect x="1548" y="1815" width="88" height="72" fill="none" stroke="#ee3a24" stroke-width="5"/>
</svg>

</body>
</html>
```

FILE: styles.css
```css
* {
    box-sizing: border-box;
}

body {
    margin: 0;
    width: 3450px;
    height: 2130px;
    overflow: hidden;
    position: relative;
    background-color: #141414;
    font-family: Lato, "Open Sans", sans-serif;
    font-size: 22px;
    color: #8f8f8f;
}

svg {
    display: block;
    flex: none;
}

.defs {
    position: absolute;
}

.blue {
    color: #4a90e2;
}

.dim {
    color: #484848;
}

/* top toolbar */
.toolbar {
    height: 48px;
    background-color: #242424;
    display: flex;
    align-items: center;
    padding-left: 4px;
    color: #777;
}

.grip {
    width: 6px;
    height: 40px;
    background: repeating-linear-gradient(180deg, #555 0 2px, transparent 2px 5px);
}

.modes {
    display: flex;
    margin-left: 6px;
    width: 369px;
    height: 42px;
    border: 2px solid #2f2f2f;
    border-radius: 4px;
}

.mode {
    display: flex;
    align-items: center;
    gap: 15px;
    padding-left: 20px;
    width: 183px;
    color: #999;
}

.mode svg {
    color: #888;
}

.mode.on {
    background-color: #161616;
    color: #4a90e2;
    width: 186px;
    border-left: 2px solid #2f2f2f;
}

.mode.on svg {
    color: #4a90e2;
}

.tb-sep {
    width: 2px;
    height: 48px;
    background-color: #2e2e2e;
    margin-left: 45px;
}

.tb-sep.short {
    height: 36px;
    margin-left: 24px;
}

.tb-dim {
    display: flex;
    gap: 20px;
    margin-left: 48px;
    color: #3e3e3e;
}

.tools {
    display: flex;
    margin-left: 10px;
    height: 46px;
}

.tool {
    width: 54.4px;
    display: flex;
    align-items: center;
    justify-content: center;
    color: #888;
}

.tool.on {
    color: #4a90e2;
    position: relative;
}

.tool.on svg {
    background-color: #151515;
    box-shadow: 0 0 0 5px #151515;
    border-radius: 2px;
}

.tool.dim {
    color: #444;
}

.ws {
    display: flex;
    align-items: center;
    margin-left: auto;
    height: 48px;
    border-left: 2px solid #181818;
    padding-left: 47px;
}

.ws-item {
    height: 48px;
    display: flex;
    align-items: center;
    color: #9a9a9a;
}

.ws-default {
    width: 97px;
    color: #4a90e2;
}

.ws-menu {
    width: 60px;
    color: #4a90e2;
}

.ws-edit {
    width: 276px;
}

.ws-radio {
    width: 247px;
}

.ws-more {
    width: 41px;
    border-right: 2px solid #2e2e2e;
    color: #888;
}

.help {
    width: 387px;
    height: 36px;
    margin: 0 10px 0 9px;
    padding-left: 10px;
    background-color: #141414;
    border-radius: 4px;
    display: flex;
    align-items: center;
    gap: 26px;
    color: #aaa;
}

.help span {
    padding-top: 4px;
}

.help svg {
    color: #777;
}

/* panels */
.workspace {
    display: flex;
    gap: 9px;
    padding-top: 8px;
    height: 2042px;
}

.left-col {
    width: 638px;
    display: flex;
    flex-direction: column;
}

.right-col {
    flex: 1;
    display: flex;
    flex-direction: column;
    gap: 8px;
}

.panel {
    background-color: #232323;
    display: flex;
    flex-direction: column;
    color: #8f8f8f;
}

.tabs {
    display: flex;
    height: 52px;
    padding-left: 18px;
    flex: none;
}

.tab {
    display: flex;
    align-items: center;
    gap: 21px;
    padding: 4px 0 0 2px;
    margin-left: 44px;
    color: #8f8f8f;
}

.tab.active {
    color: #c4c4c4;
    border-bottom: 4px solid #bbb;
    margin-left: 0;
}

.tab.active svg {
    color: #888;
}

.tab.wide {
    margin-left: 80px;
}

.tab-end {
    margin-left: auto;
    width: 79px;
    height: 36px;
    margin-top: 10px;
    border-left: 2px solid #333;
    display: flex;
    align-items: center;
    justify-content: flex-end;
    padding-right: 8px;
    color: #888;
}

.list {
    background-color: #1c1c1c;
    border: 2px solid #2e2e2e;
    position: relative;
    overflow: hidden;
}

.row {
    display: flex;
    align-items: center;
    border-bottom: 2px solid #2e2e2e;
}

.thumb {
    position: absolute;
    background-color: #383838;
    border-radius: 10px;
    height: 20px;
}

.sort {
    display: inline-block;
    vertical-align: 1px;
    color: #999;
}

.preview {
    display: flex;
    align-items: center;
    color: #888;
}

/* files */
.files {
    height: 516px;
    margin-bottom: 8px;
}

.file-tools {
    display: flex;
    align-items: center;
    height: 40px;
    margin-top: 12px;
    padding-left: 16px;
    gap: 22px;
    color: #7c7c7c;
}

.file-tools .first-dim {
    margin-left: 59px;
}

.file-tools .dim {
    color: #444;
}

.search {
    width: 288px;
    height: 39px;
    margin-left: -2px;
    background-color: #141414;
    border: 2px solid #2e2e2e;
    border-radius: 3px;
    display: flex;
    align-items: center;
    padding-left: 12px;
}

.list-head {
    margin: 8px 11px 0 6px;
    height: 40px;
    display: flex;
    align-items: center;
    padding-left: 11px;
    color: #8f8f8f;
}

.lh-name {
    width: 349px;
}

.lh-status {
    width: 83px;
    border-left: 2px solid #2c2c2c;
    padding-left: 8px;
    height: 40px;
    line-height: 38px;
}

.lh-dur {
    border-left: 2px solid #2c2c2c;
    padding-left: 8px;
    height: 40px;
    line-height: 38px;
}

.file-list {
    margin: 0 11px 0 6px;
    height: 299px;
}

.file-row {
    height: 39px;
    padding-left: 60px;
    color: #7c7c7c;
}

.f-name {
    margin-left: 14px;
    width: 371px;
}

.file-thumb {
    left: 0;
    bottom: 0;
    width: 144px;
}

.files .preview {
    height: 60px;
    padding-left: 245px;
    gap: 37px;
}

/* media browser */
.media {
    height: 787px;
    margin-bottom: 9px;
}

.contents-row {
    display: flex;
    align-items: center;
    height: 40px;
    margin-top: 12px;
    padding-left: 16px;
    color: #7c7c7c;
}

.contents-label {
    margin-left: 112px;
    color: #8f8f8f;
}

.contents-select {
    margin-left: 12px;
    width: 324px;
    height: 40px;
    background-color: #1a1a1a;
    border: 2px solid #333;
    border-radius: 3px;
    display: flex;
    align-items: center;
    justify-content: space-between;
    padding: 0 11px;
    color: #b4b4b4;
}

.tri-left {
    width: 0;
    height: 0;
    margin-left: 23px;
    border-style: solid;
    border-width: 9px 14px 9px 0;
    border-color: transparent #444 transparent transparent;
}

.tri-left.small {
    position: absolute;
    margin: 32px 0 0 5px;
    border-width: 6px 8px 6px 0;
}

.browser {
    display: flex;
    margin-top: 11px;
    margin-left: 6px;
    height: 662px;
}

.tree {
    width: 144px;
    flex: none;
}

.tree-row {
    display: flex;
    align-items: center;
    height: 38px;
    white-space: nowrap;
    padding-left: 16px;
}

.tree-row .chev {
    width: 14px;
    color: #8a8a8a;
}

.tree-row .t-ic {
    margin-left: 17px;
    color: #777;
}

.tree-row span {
    margin-left: 9px;
    flex: 1;
    min-width: 0;
    overflow: hidden;
}

.tree-row.sub {
    padding-left: 58px;
}

.tree-row.sub .chev {
    width: 10px;
}

.tree-row.sub .disk {
    margin-left: 26px;
}

.tree-row.sub span {
    margin-left: 11px;
}

.tree-thumb {
    left: 0;
    bottom: 0;
    width: 50px;
}

.disk {
    width: 28px;
    height: 25px;
    flex: none;
}

.disk.hd {
    background: linear-gradient(180deg, #6f7a7e 0 22%, #c5cdd0 22% 72%, #9aa3a6 72% 84%, #4e5254 84% 100%);
}

.disk.ext {
    background: linear-gradient(180deg, #fafafa 0%, #b9b9b9 68%, #fff 70% 78%, #222 78% 84%, #fff 84%);
}

.divider {
    width: 18px;
    margin-left: 0;
    background-color: #2f2f2f;
    flex: none;
    position: relative;
}

.dots {
    position: absolute;
    left: 6px;
    top: 308px;
    width: 6px;
    height: 47px;
    background: repeating-linear-gradient(180deg, #666 0 1px, transparent 1px 3px);
}

.browser-right {
    width: 459px;
    margin-left: 1px;
}

.browser-head {
    height: 41px;
    display: flex;
    align-items: center;
    padding-left: 9px;
}

.bh-name {
    width: 392px;
}

.bh-dur {
    border-left: 2px solid #2c2c2c;
    padding-left: 8px;
    height: 30px;
    line-height: 28px;
    overflow: hidden;
}

.browse-list {
    height: 561px;
}

.browse-row {
    height: 37.5px;
    padding-left: 13px;
    color: #8f8f8f;
}

.browse-row svg {
    color: #8a8a8a;
}

.browse-row .disk {
    margin-left: 24px;
}

.browse-row span {
    margin-left: 15px;
}

.browse-thumb {
    left: 0;
    bottom: 0;
    width: 82px;
}

.media-preview {
    height: 60px;
    padding-left: 159px;
    gap: 37px;
}

/* history */
.history {
    height: 710px;
}

.hist-list {
    margin: 14px 11px 0 6px;
    height: 584px;
}

.hist-row {
    height: 38px;
    display: flex;
    align-items: center;
    padding-left: 42px;
    border-bottom: 2px solid #2e2e2e;
    color: #8f8f8f;
    position: relative;
}

.hist-row .h-ic {
    color: #777;
}

.hist-row span {
    margin-left: 16px;
}

.hist-row.cur {
    background-color: #484848;
    font-weight: 700;
    height: 36px;
    border: none;
}

.h-tri {
    position: absolute;
    left: 4px;
    color: #888;
}

.hist-foot {
    display: flex;
    flex: 1;
    align-items: center;
    justify-content: space-between;
    padding: 0 23px 0 7px;
}

/* editor */
.upper {
    display: flex;
    gap: 8px;
    height: 1834px;
}

.editor {
    width: 1880px;
    position: relative;
}

.editor-tabs {
    padding-left: 21px;
}

.zoom-row {
    height: 104px;
    border-top: 4px solid #262626;
    display: flex;
    align-items: center;
    padding: 0 0 6px 9px;
    gap: 20px;
    color: #777;
}

.nav-bar {
    width: 1783px;
    height: 60px;
    display: flex;
    align-items: stretch;
}

.nav-h {
    width: 13px;
    margin: 5px 0;
    border-radius: 4px;
    background-color: #777;
    flex: none;
    border: 4px solid #5f5f5f;
}

.nav-mid {
    flex: 1;
    background-color: #2c2c2c;
    border-top: 4px solid #5f5f5f;
    border-bottom: 4px solid #5f5f5f;
}

.ctl-row {
    height: 60px;
    display: flex;
    position: relative;
}

.seg-group {
    display: flex;
    margin: 6px 0 0 13px;
    height: 44px;
    background-color: #2b2b2b;
    border-radius: 4px;
    padding: 2px;
    gap: 2px;
    flex: none;
}

.seg {
    width: 40px;
    background-color: #232323;
    display: flex;
    align-items: center;
    justify-content: center;
    color: #777;
    border-radius: 3px;
}

.seg.on {
    background-color: #151515;
    color: #4a90e2;
}

.metro {
    margin: 18px 0 0 100px;
    color: #666;
}

.timer {
    margin: 18px 0 0 15px;
    color: #777;
}

.snap {
    display: flex;
    margin: 10px 0 0 7px;
    height: 44px;
    background-color: #2b2b2b;
    border-radius: 4px;
    padding: 2px;
    gap: 2px;
}

.ruler {
    margin: 8px 0 0 14px;
    width: 1370px;
    height: 52px;
    border-top: 2px solid #000;
    border-left: 2px solid #000;
    border-right: 2px solid #000;
    overflow: hidden;
    position: relative;
    flex: none;
}

.ruler-labels {
    display: flex;
    height: 32px;
    align-items: center;
    font-size: 20px;
    color: #8a8a8a;
    white-space: nowrap;
}

.ruler-labels span {
    width: 227.6px;
    flex: none;
    text-align: center;
}

.ruler-labels .hms {
    width: 114px;
    text-align: left;
    padding-left: 6px;
    font-size: 22px;
}

.ruler-ticks {
    height: 18px;
    background:
        repeating-linear-gradient(90deg, #8a8a8a 0 2px, transparent 2px 227.6px) 0 0 / 100% 100%,
        repeating-linear-gradient(90deg, #8a8a8a 0 2px, transparent 2px 45.52px) 0 6px / 100% 100% no-repeat;
}

.marker {
    position: absolute;
    width: 22px;
    height: 26px;
    top: 34px;
    clip-path: polygon(0 0, 100% 0, 100% 50%, 50% 100%, 0 50%);
}

.m-start {
    left: 449px;
    background-color: #3a5a8c;
}

.m-end {
    left: 1813px;
    background-color: #4a8de8;
}

.lanes {
    height: 1541px;
    display: flex;
    overflow: hidden;
    padding-left: 13px;
    position: relative;
}

.tracks {
    width: 1810px;
    flex: none;
    overflow: hidden;
    position: relative;
    background-color: #2e2e2e;
}

.track {
    display: flex;
    height: 268px;
    margin-bottom: 6px;
}

.head {
    width: 445px;
    flex: none;
    display: flex;
    background-color: #232323;
}

.band {
    width: 26px;
    flex: none;
    border-radius: 8px 0 0 8px;
}

.b1 { background-color: #5aa884; margin-top: 2px; }
.b7 { background-color: #1a2a3f; }
.b2 { background-color: #2b1f47; }
.b3 { background-color: #3f3a1c; }
.b4 { background-color: #1a3238; }
.b5 { background-color: #371d42; }

.head-body {
    flex: 1;
    padding: 14px 11px 0 8px;
}

.clip {
    flex: 1;
    background-color: #1c1c1c;
}

.name-row {
    display: flex;
    align-items: center;
    height: 36px;
    padding-left: 8px;
    color: #8a8a8a;
}

.t-name {
    margin-left: 10px;
    color: #8f8f8f;
}

.msri {
    display: flex;
    gap: 10px;
    margin-left: auto;
    margin-right: -1px;
}

.msri b {
    width: 34px;
    height: 36px;
    border-radius: 4px;
    background-color: #1c1c1c;
    border: 2px solid #303030;
    box-sizing: border-box;
    font-family: "DejaVu Sans Mono", monospace;
    font-weight: 400;
    font-size: 20px;
    line-height: 32px;
    text-align: center;
    color: #7c7c7c;
}

.msri b.off {
    background-color: #242424;
    color: #454545;
}

.msri b.rec {
    background-color: #862a1e;
    color: #b08a84;
}

.ctl-wrap {
    display: flex;
    margin-top: 10px;
}

.ctls {
    width: 356px;
    flex: none;
}

.knobs {
    display: flex;
    align-items: center;
    height: 38px;
    color: #777;
}

.knob {
    margin-left: 11px;
}

.val {
    color: #4a90e2;
    font-size: 24px;
    margin-left: 9px;
}

.v-vol {
    width: 73px;
}

.pan {
    flex: none;
    margin-left: 9px;
}

.pan + .knob {
    margin-left: 9px;
}

.v-pan {
    flex: 1;
}

.mon {
    color: #555;
}

.io {
    display: flex;
    align-items: center;
    height: 34px;
    color: #7c7c7c;
}

.io.in {
    margin-top: 8px;
}

.io.out {
    margin-top: 10px;
}

.io.auto {
    margin-top: 36px;
}

.io-ic {
    margin-right: 10px;
}

.chev-ic {
    margin: 0 24px 0 3px;
    color: #888;
}

.sel-box {
    flex: 1;
    height: 34px;
    min-width: 0;
    background-color: #1c1c1c;
    border: 2px solid #2f2f2f;
    display: flex;
    align-items: center;
    justify-content: space-between;
    padding: 0 10px 0 11px;
    color: #bbb;
    white-space: nowrap;
    overflow: hidden;
}

.sel-box svg {
    color: #999;
}

.sel-box.round {
    border-radius: 6px;
}

.phase {
    width: 34px;
    height: 34px;
    margin-left: 10px;
    background-color: #1c1c1c;
    border: 2px solid #2f2f2f;
    border-radius: 4px;
    display: flex;
    align-items: center;
    justify-content: center;
    color: #666;
    flex: none;
}

.meter {
    width: 34px;
    height: 186px;
    margin: 10px 0 0 10px;
    border: 2px solid #000;
    border-bottom-width: 3px;
    background-color: #1c1c1c;
    display: flex;
    flex-direction: column;
}

.m-top {
    height: 18px;
    border-bottom: 2px solid #000;
    display: flex;
    flex: none;
}

.m-top i {
    flex: 1;
}

.m-top i + i {
    border-left: 2px solid #000;
}

.m-body {
    flex: 1;
    display: flex;
    align-items: flex-end;
    gap: 2px;
    padding: 0 1px 3px;
}

.m-body i {
    flex: 1;
    height: 2px;
    background-color: #e8e040;
}

/* selected track and the armed one */
.track.sel {
    background-color: #303030;
}

.track.sel .head {
    background-color: #303030;
}

.track.sel .clip {
    background-color: #4c4c4c;
    margin-top: 2px;
}

.track.sel .msri b {
    border-color: #1c1c1c;
}

.track.sel .msri b.off {
    background-color: #2a2a2a;
    border-color: #2a2a2a;
}

.track.sel .sel-box,
.track.sel .phase {
    border-color: #1c1c1c;
}

.cti-zero {
    position: absolute;
    left: 445px;
    top: 0;
    bottom: 0;
    width: 2px;
    background: repeating-linear-gradient(180deg, #a8261c 0 6px, transparent 6px 10px);
}

.end-line {
    width: 2px;
    background-color: #b02a1e;
    flex: none;
    margin-left: -2px;
    margin-top: 2px;
}

.map {
    width: 36px;
    flex: none;
    display: flex;
    flex-direction: column;
    position: relative;
    padding: 13px 4px 0;
    gap: 5px;
    background: linear-gradient(90deg, #000 0 2px, transparent 2px 34px, #000 34px 36px) 0 0 / 100% 1540px no-repeat;
}

.map-band {
    flex: none;
    height: 182px;
}

.o1 { background-color: #7cb89e; height: 181px; }
.o2 { background-color: #3f4c5c; height: 187px; }
.o3 { background-color: #544a63; height: 188px; }
.o4 { background-color: #65623f; height: 187px; }
.o5 { background-color: #4a5858; height: 188px; }
.o6 { background-color: #5b4862; height: 120px; margin-bottom: 0; }
.o7 { background-color: #351d3e; height: 66px; margin-top: -5px; }
.o8 { background-color: #2e3920; height: 186px; }
.o9 { background-color: #1a2a3f; height: 188px; }

.map-frame {
    position: absolute;
    left: 0;
    top: 6px;
    width: 36px;
    height: 1080px;
    border: 4px solid #5f5f5f;
    border-top: none;
    border-bottom: none;
    border-radius: 4px;
}

.map-h {
    position: absolute;
    left: 2px;
    width: 24px;
    height: 12px;
    background-color: #5f5f5f;
    border-radius: 4px;
}

.map-h.top {
    top: -4px;
}

.map-h.bot {
    bottom: -4px;
}

/* transport */
.transport {
    height: 77px;
    display: flex;
    padding: 15px 0 0 21px;
    background: linear-gradient(180deg, #282828 0 15px, #232323 15px);
    color: #777;
}

.time {
    width: 469px;
    font-size: 32px;
    color: #4a90e2;
    line-height: 56px;
}

.t-btns,
.z-btns {
    display: flex;
    height: 48px;
}

.z-btns {
    margin-left: 167px;
    color: #7a7a7a;
}

.t-btn,
.z-btn {
    width: 60px;
    display: flex;
    align-items: center;
    justify-content: center;
}

.z-btn {
    gap: 1px;
}

.z-btn.col {
    flex-direction: column;
}

.z-btn.dim {
    color: #444;
}

.flip {
    transform: scaleX(-1);
}

.stop {
    width: 18px;
    height: 18px;
    background-color: #484848;
}

.pause {
    width: 16px;
    height: 18px;
    border-left: 6px solid #484848;
    border-right: 6px solid #484848;
}

.rec-btn {
    width: 56px;
    height: 48px;
    background-color: #2a2a2a;
    border: 2px solid #303030;
    border-radius: 4px;
    display: flex;
    align-items: center;
    justify-content: center;
}

.rec-dot {
    width: 20px;
    height: 20px;
    border-radius: 50%;
    background-color: #e34b4b;
}

/* essential sound */
.essential {
    width: 913px;
    border: 3px solid #4a8de0;
    border-bottom-width: 3px;
    color: #5c5c5c;
}

.es-title {
    display: flex;
    align-items: center;
    gap: 21px;
    height: 54px;
    padding: 0 0 0 22px;
    border-bottom: 3px solid #2b2b2b;
    color: #b8b8b8;
    flex: none;
}

.es-title svg {
    color: #777;
}

.es-none {
    height: 62px;
    flex: none;
    display: flex;
    align-items: center;
    padding: 6px 0 0 19px;
    font-style: italic;
    color: #9a9a9a;
    border-bottom: 3px solid #2b2b2b;
}

.es-preset {
    height: 71px;
    flex: none;
    display: flex;
    align-items: center;
    padding: 0 19px 2px;
    border-bottom: 3px solid #2b2b2b;
    color: #555;
}

.es-select {
    margin-left: 14px;
    flex: 1;
    height: 40px;
    background-color: #2a2a2a;
    display: flex;
    align-items: center;
    justify-content: flex-end;
    padding-right: 10px;
    color: #444;
}

.es-gap {
    height: 63px;
    flex: none;
    border-bottom: 3px solid #2b2b2b;
}

.es-text {
    margin: 43px 40px 20px 39px;
    font-size: 28px;
    line-height: 38px;
    color: #5e5e5e;
}

.es-btn {
    height: 60px;
    margin: 0 40px 20px 39px;
    border: 2px solid #333;
    border-radius: 4px;
    display: flex;
    align-items: center;
    padding-left: 380px;
    color: #4e4e4e;
}

.es-btn svg {
    margin-right: 12px;
}

.es-btn:nth-of-type(n) span {
    color: #555;
}

/* levels and selection */
.lower {
    display: flex;
    gap: 9px;
    height: 188px;
}

.levels {
    width: 2238px;
}

.tabs.plain {
    padding-left: 22px;
}

.head-tab {
    margin-left: 0;
    color: #b0b0b0;
}

.head-tab svg {
    color: #777;
}

.lv-box {
    margin: 14px 0 0 9px;
    width: 2218px;
    height: 82px;
    border: 3px solid #000;
    background-color: #1c1c1c;
    display: flex;
    flex-direction: column;
    gap: 2px;
    flex: none;
}

.lv-chan {
    flex: 1;
    margin-left: 2px;
    border-left: 2px solid #e8e040;
    display: flex;
    justify-content: flex-end;
}

.lv-clip {
    width: 17px;
    border-left: 2px solid #000;
}

.lv-chan:first-child .lv-clip {
    box-shadow: 0 2px 0 #000;
}

.lv-ticks {
    margin-left: 14px;
    width: 2192px;
    height: 9px;
    flex: none;
    background:
        repeating-linear-gradient(90deg, #777 0 2px, transparent 2px 109.4px) 0 0 / 100% 100%,
        repeating-linear-gradient(90deg, #777 0 2px, transparent 2px 36.47px) 0 0 / 100% 4px no-repeat;
}

.lv-labels {
    margin-left: -4px;
    width: 2226px;
    display: flex;
    justify-content: space-between;
    font-size: 20px;
    color: #808080;
    line-height: 28px;
    padding-top: 2px;
}

.lv-labels span {
    width: 36px;
    text-align: center;
}

.selection {
    flex: 1;
}

.selection .tabs {
    padding-left: 22px;
}

.sel-grid {
    display: grid;
    grid-template-columns: 106px 145px 141px 1fr;
    grid-template-rows: 36px 39px 44px;
    align-items: center;
    padding: 7px 0 0 21px;
    font-size: 21px;
}

/* status bar */
.status {
    height: 38px;
    margin-top: 2px;
    background-color: #232323;
    border-radius: 0 0 14px 14px;
    box-shadow: 0 2px 0 #555;
    display: flex;
    align-items: center;
    padding-left: 11px;
    color: #8f8f8f;
    white-space: nowrap;
}

.st-msg {
    width: 2427px;
    font-size: 22px;
}

.st-cell {
    height: 30px;
    line-height: 30px;
    border-left: 2px solid #2e2e2e;
    flex: none;
}

.c1 {
    width: 101px;
}

.c2 {
    width: 99px;
}

.c3 {
    width: 279px;
    padding-left: 18px;
}

.c4 {
    width: 122px;
    padding-left: 18px;
}

.c5 {
    width: 131px;
    padding-left: 34px;
}

.c6 {
    width: 163px;
    padding-left: 18px;
    border-right: 2px solid #2e2e2e;
}

.annot {
    position: absolute;
    left: 0;
    top: 0;
    pointer-events: none;
}
```
